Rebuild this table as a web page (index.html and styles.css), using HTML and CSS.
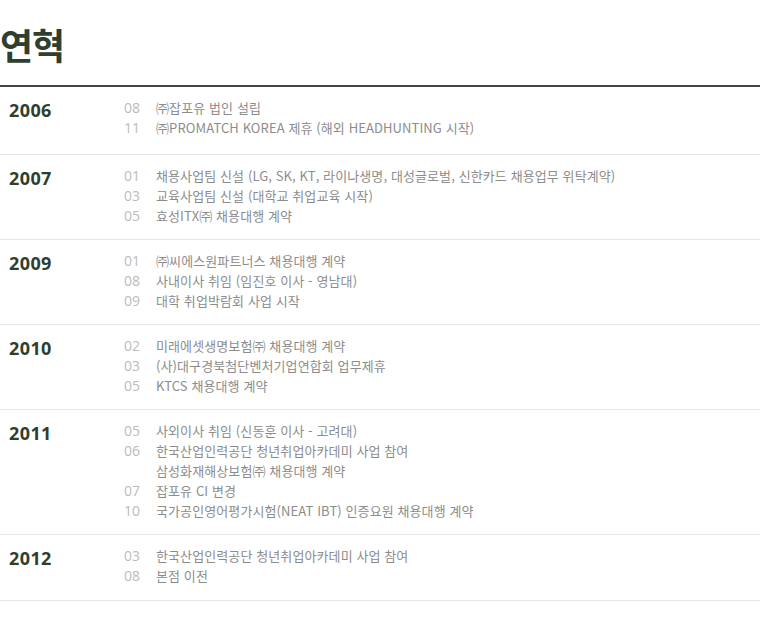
FILE: index.html
```html
<!DOCTYPE html>
<html lang="ko">
<head>
<meta charset="utf-8">
<link rel="stylesheet" href="styles.css">
</head>
<body>
<div class="page">
  <h1 class="title">연혁</h1>
  <div class="history">
    <div class="row first">
      <div class="year">2006</div>
      <ul class="events">
        <li><span class="mon">08</span><span class="txt">㈜잡포유 법인 설립</span></li>
        <li><span class="mon">11</span><span class="txt">㈜PROMATCH KOREA 제휴 (해외 HEADHUNTING 시작)</span></li>
      </ul>
    </div>
    <div class="row">
      <div class="year">2007</div>
      <ul class="events">
        <li><span class="mon">01</span><span class="txt">채용사업팀 신설 (LG, SK, KT, 라이나생명, 대성글로벌, 신한카드 채용업무 위탁계약)</span></li>
        <li><span class="mon">03</span><span class="txt">교육사업팀 신설 (대학교 취업교육 시작)</span></li>
        <li><span class="mon">05</span><span class="txt">효성ITX㈜ 채용대행 계약</span></li>
      </ul>
    </div>
    <div class="row">
      <div class="year">2009</div>
      <ul class="events">
        <li><span class="mon">01</span><span class="txt">㈜씨에스원파트너스 채용대행 계약</span></li>
        <li><span class="mon">08</span><span class="txt">사내이사 취임 (임진호 이사 - 영남대)</span></li>
        <li><span class="mon">09</span><span class="txt">대학 취업박람회 사업 시작</span></li>
      </ul>
    </div>
    <div class="row">
      <div class="year">2010</div>
      <ul class="events">
        <li><span class="mon">02</span><span class="txt">미래에셋생명보험㈜ 채용대행 계약</span></li>
        <li><span class="mon">03</span><span class="txt">(사)대구경북첨단벤처기업연합회 업무제휴</span></li>
        <li><span class="mon">05</span><span class="txt">KTCS 채용대행 계약</span></li>
      </ul>
    </div>
    <div class="row">
      <div class="year">2011</div>
      <ul class="events">
        <li><span class="mon">05</span><span class="txt">사외이사 취임 (신동훈 이사 - 고려대)</span></li>
        <li><span class="mon">06</span><span class="txt">한국산업인력공단 청년취업아카데미 사업 참여</span></li>
        <li><span class="mon"></span><span class="txt">삼성화재해상보험㈜ 채용대행 계약</span></li>
        <li><span class="mon">07</span><span class="txt">잡포유 CI 변경</span></li>
        <li><span class="mon">10</span><span class="txt">국가공인영어평가시험(NEAT IBT) 인증요원 채용대행 계약</span></li>
      </ul>
    </div>
    <div class="row last">
      <div class="year">2012</div>
      <ul class="events">
        <li><span class="mon">03</span><span class="txt">한국산업인력공단 청년취업아카데미 사업 참여</span></li>
        <li><span class="mon">08</span><span class="txt">본점 이전</span></li>
      </ul>
    </div>
  </div>
</div>
</body>
</html>
```

FILE: styles.css
```css
html, body {
  margin: 0;
  padding: 0;
  background: #fff;
}

.page {
  width: 760px;
  font-family: "Noto Sans CJK KR", "Noto Sans", sans-serif;
}

.title {
  margin: 0;
  padding-top: 24px;
  height: 85px;
  box-sizing: border-box;
  font-size: 36px;
  line-height: 40px;
  font-weight: 700;
  color: #2f3f2f;
  letter-spacing: -1px;
}

.history {
  border-top: 2px solid #444;
}

.row {
  display: flex;
  padding: 11px 0 13px;
  border-bottom: 1px solid #e5e5e5;
}

.row.first {
  padding-bottom: 16px;
}

.row.last {
  padding-bottom: 14px;
}

.year {
  width: 124px;
  padding-left: 9px;
  box-sizing: border-box;
  font-family: "Open Sans", "Noto Sans", sans-serif;
  font-weight: 700;
  font-size: 18px;
  line-height: 24px;
  letter-spacing: 0.4px;
  color: #2f3f2f;
}

.events {
  list-style: none;
  margin: 0;
  padding: 0;
}

.events li {
  display: flex;
  height: 20px;
  line-height: 20px;
}

.mon {
  width: 32px;
  flex: none;
  font-family: "Open Sans", "Noto Sans", sans-serif;
  font-size: 14px;
  color: #bbb;
}

.txt {
  font-size: 13px;
  letter-spacing: 0.1px;
  color: #8c8c8c;
  white-space: nowrap;
}
```
